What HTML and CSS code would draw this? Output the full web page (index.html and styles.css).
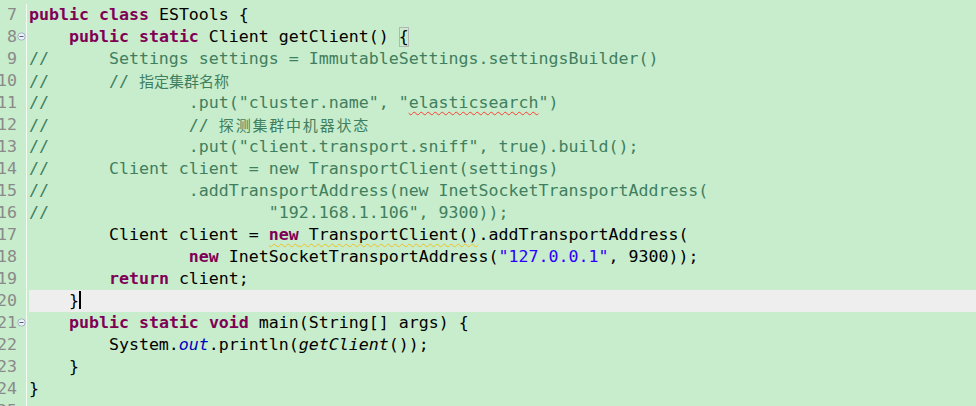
FILE: index.html
```html
<!DOCTYPE html>
<html>
<head>
<meta charset="utf-8">
<link rel="stylesheet" href="styles.css">
</head>
<body>
<div class="editor">
  <div class="gutter">
    <div class="gl"><span class="num">7</span><span class="fold"></span></div>
    <div class="gl"><span class="num">8</span><span class="fold"><svg width="9" height="9" viewBox="0 0 9 9"><circle cx="4.5" cy="4.5" r="3.7" fill="#eef2f6" stroke="#9fb0c2" stroke-width="1"/><line x1="2.5" y1="4.5" x2="6.5" y2="4.5" stroke="#4f6377" stroke-width="1"/></svg></span></div>
    <div class="gl"><span class="num">9</span><span class="fold"></span></div>
    <div class="gl"><span class="num">10</span><span class="fold"></span></div>
    <div class="gl"><span class="num">11</span><span class="fold"></span></div>
    <div class="gl"><span class="num">12</span><span class="fold"></span></div>
    <div class="gl"><span class="num">13</span><span class="fold"></span></div>
    <div class="gl"><span class="num">14</span><span class="fold"></span></div>
    <div class="gl"><span class="num">15</span><span class="fold"></span></div>
    <div class="gl"><span class="num">16</span><span class="fold"></span></div>
    <div class="gl"><span class="num">17</span><span class="fold"></span></div>
    <div class="gl"><span class="num">18</span><span class="fold"></span></div>
    <div class="gl"><span class="num">19</span><span class="fold"></span></div>
    <div class="gl"><span class="num">20</span><span class="fold"></span></div>
    <div class="gl"><span class="num">21</span><span class="fold"><svg width="9" height="9" viewBox="0 0 9 9"><circle cx="4.5" cy="4.5" r="3.7" fill="#eef2f6" stroke="#9fb0c2" stroke-width="1"/><line x1="2.5" y1="4.5" x2="6.5" y2="4.5" stroke="#4f6377" stroke-width="1"/></svg></span></div>
    <div class="gl"><span class="num">22</span><span class="fold"></span></div>
    <div class="gl"><span class="num">23</span><span class="fold"></span></div>
    <div class="gl"><span class="num">24</span><span class="fold"></span></div>
    <div class="gl"><span class="num">25</span><span class="fold"></span></div>
  </div>
  <div class="code">
<div class="ln"><span class="kw">public</span> <span class="kw">class</span> ESTools {</div>
<div class="ln">    <span class="kw">public</span> <span class="kw">static</span> Client getClient() <span class="match">{</span></div>
<div class="ln cm">//      Settings settings = ImmutableSettings.settingsBuilder()</div>
<div class="ln cm">//      // <span class="cjk">指定集群名称</span></div>
<div class="ln cm">//              .put("cluster.name", "<span class="err">elasticsearch</span>")</div>
<div class="ln cm">//              // <span class="cjk cjk-wide">探测集群中机器状态</span></div>
<div class="ln cm">//              .put("client.transport.sniff", true).build();</div>
<div class="ln cm">//      Client client = new TransportClient(settings)</div>
<div class="ln cm">//              .addTransportAddress(new InetSocketTransportAddress(</div>
<div class="ln cm">//                      "192.168.1.106", 9300));</div>
<div class="ln">        Client client = <span class="warn"><span class="kw">new</span> TransportClient()</span>.addTransportAddress(</div>
<div class="ln">                <span class="kw">new</span> InetSocketTransportAddress(<span class="str">"127.0.0.1"</span>, 9300));</div>
<div class="ln">        <span class="kw">return</span> client;</div>
<div class="ln current">    }<span class="caret"></span></div>
<div class="ln">    <span class="kw">public</span> <span class="kw">static</span> <span class="kw">void</span> main(String[] args) {</div>
<div class="ln">        System.<span class="field">out</span>.println(<span class="smeth">getClient</span>());</div>
<div class="ln">    }</div>
<div class="ln">}</div>
<div class="ln"> </div>
  </div>
</div>
</body>
</html>
```
FILE: styles.css
```css
html, body {
  margin: 0;
  padding: 0;
  background: #c7edcc;
  overflow: hidden;
}

.editor {
  display: flex;
  height: 406px;
  padding-top: 4px;
  box-sizing: border-box;
  font-family: "DejaVu Sans Mono", "Liberation Mono", monospace;
  font-size: 16.6px;
}

.gutter {
  width: 26px;
  flex: none;
  color: #8a8a8a;
}

.gl {
  height: 22px;
  line-height: 22px;
  display: flex;
  align-items: center;
}

.num {
  width: 17px;
  display: flex;
  justify-content: flex-end;
  white-space: pre;
  flex: none;
}

.fold {
  width: 9px;
  height: 9px;
  margin-top: -2px;
  flex: none;
  display: flex;
}

.code {
  flex: 1;
  border-left: 1px solid #f4fbf5;
  padding-left: 2px;
  color: #000;
}

.ln {
  height: 22px;
  line-height: 22px;
  white-space: pre;
}

.current {
  background: #eeeeee;
}

.kw {
  color: #7f0055;
  font-weight: bold;
}

.cm {
  color: #3f7f5f;
}

.str {
  color: #2a00ff;
}

.field {
  color: #0000c0;
  font-style: italic;
}

.smeth {
  font-style: italic;
}

.cjk {
  font-family: "Noto Sans CJK SC", sans-serif;
  font-size: 15px;
}

.cjk-wide {
  letter-spacing: 1.8px;
}

.match {
  display: inline-block;
  line-height: 20px;
  box-shadow: inset 0 0 0 1px #b4b4b4;
}

.err {
  text-decoration: underline wavy #ff3b30;
  text-decoration-thickness: 1px;
  text-underline-offset: 3px;
}

.warn {
  text-decoration: underline wavy #f0c020;
  text-decoration-thickness: 1px;
  text-underline-offset: 3px;
}

.caret {
  display: inline-block;
  width: 2px;
  height: 18px;
  background: #000;
  vertical-align: middle;
  margin-top: -3px;
}
```
